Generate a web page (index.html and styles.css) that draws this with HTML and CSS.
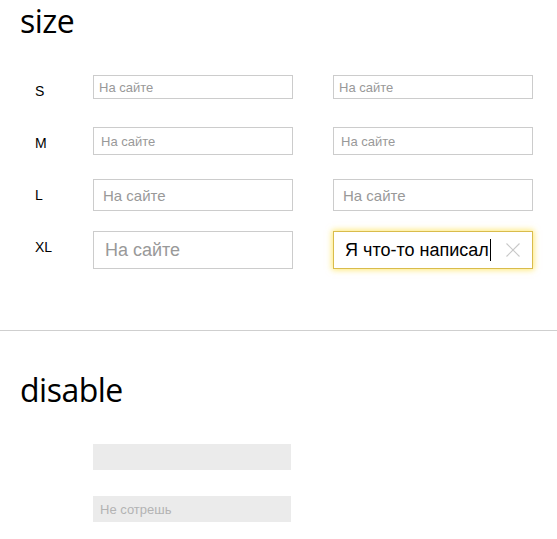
FILE: index.html
```html
<!DOCTYPE html>
<html lang="ru">
<head>
<meta charset="utf-8">
<title>input</title>
<link rel="stylesheet" href="styles.css">
</head>
<body>
<section class="section">
  <h1 class="title">size</h1>
  <div class="rows">
    <div class="label">S</div>
    <input class="input input_s" placeholder="На сайте">
    <input class="input input_s" placeholder="На сайте">

    <div class="label">M</div>
    <input class="input input_m" placeholder="На сайте">
    <input class="input input_m" placeholder="На сайте">

    <div class="label">L</div>
    <input class="input input_l" placeholder="На сайте">
    <input class="input input_l" placeholder="На сайте">

    <div class="label">XL</div>
    <input class="input input_xl" placeholder="На сайте">
    <div class="input input_xl input_focused">
      <span class="value">Я что-то написал</span><span class="caret"></span>
      <svg class="clear" width="14" height="14" viewBox="0 0 14 14"><path d="M0.5 0.5L13.5 13.5M13.5 0.5L0.5 13.5" stroke="#c8c8c8" stroke-width="1.1" fill="none"/></svg>
    </div>
  </div>
</section>
<hr class="divider">
<section class="section">
  <h1 class="title title_second">disable</h1>
  <div class="rows rows_disabled">
    <div class="label"></div>
    <input class="input input_disabled" disabled>
    <div class="label"></div>
    <input class="input input_disabled" disabled placeholder="Не сотрешь">
  </div>
</section>
</body>
</html>
```
FILE: styles.css
```css
* { box-sizing: border-box; }
body {
  margin: 0;
  background: #fff;
  color: #000;
  font-family: "Liberation Sans", Arial, sans-serif;
}
.section {
  padding: 0 20px;
}
.title {
  margin: 0;
  font-family: "Open Sans", sans-serif;
  font-weight: 400;
  font-size: 32px;
  line-height: 42px;
  letter-spacing: -0.5px;
}
.title_second {
  margin-top: 38px;
}
.rows {
  display: grid;
  grid-template-columns: 33px 200px 200px;
  column-gap: 40px;
  grid-auto-rows: 52px;
  align-items: start;
  margin-top: 33px;
}
.rows_disabled {
  grid-template-columns: 33px 200px;
  margin-top: 33px;
}
.label {
  font-size: 14px;
  line-height: 16px;
  padding: 8px 0 0 15px;
}
.input {
  display: block;
  width: 200px;
  margin: 0;
  border: 1px solid #cccccc;
  border-radius: 0;
  background: #fff;
  color: #000;
  font-family: "Liberation Sans", Arial, sans-serif;
  outline: none;
}
.input::placeholder { color: #999; opacity: 1; }
.input_s { height: 24px; font-size: 13px; padding: 0 5px; }
.input_m { height: 28px; font-size: 13px; padding: 0 7px; }
.input_l { height: 32px; font-size: 15px; padding: 0 9px; }
.input_xl { height: 38px; font-size: 18px; padding: 0 11px; }
.input_focused {
  display: flex;
  align-items: center;
  position: relative;
  border-color: #d9bc4c;
  box-shadow: 0 0 6px 1px rgba(255, 214, 0, 0.55);
}
.value { white-space: nowrap; }
.caret {
  display: inline-block;
  width: 1px;
  height: 22px;
  background: #000;
  margin-left: 1px;
}
.clear {
  position: absolute;
  right: 12px;
  top: 11px;
}
.input_disabled {
  width: 198px;
  height: 26px;
  border: none;
  background: #ebebeb;
  font-size: 13px;
  padding: 0 7px;
}
.input_disabled::placeholder { color: #b3b3b3; }
.divider {
  margin: 47px 0 0;
  border: none;
  border-top: 1px solid #cfcfcf;
  height: 0;
}
```
